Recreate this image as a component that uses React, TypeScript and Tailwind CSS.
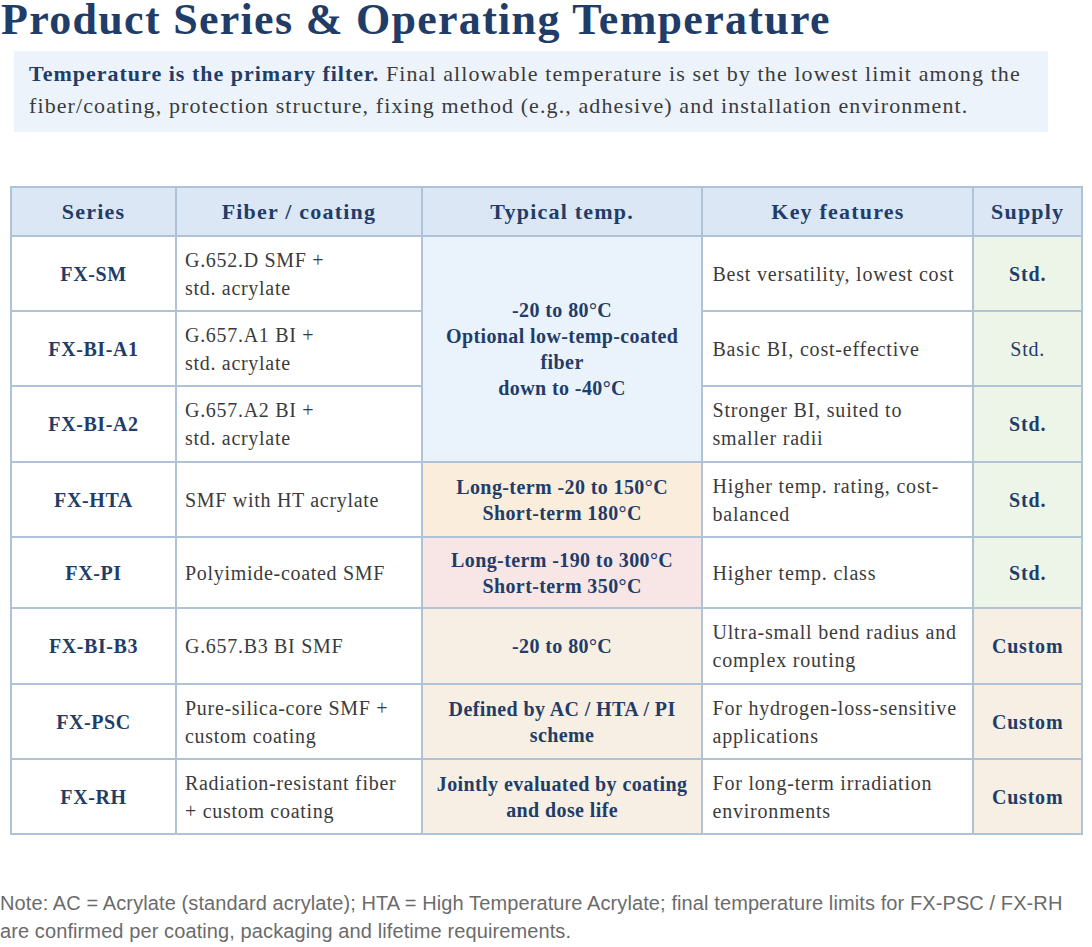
import React from "react";

type Row = {
  series: string;
  fiber: string[];
  temp?: { lines: string[]; bg: string; span?: number };
  features: string[];
  supply: string;
  supplyBold?: boolean;
  supplyBg: string;
  h: string;
};

const rows: Row[] = [
  {
    series: "FX-SM",
    fiber: ["G.652.D SMF +", "std. acrylate"],
    temp: {
      lines: ["-20 to 80°C", "Optional low-temp-coated", "fiber", "down to -40°C"],
      bg: "bg-[#eaf2fb]",
      span: 3,
    },
    features: ["Best versatility, lowest cost"],
    supply: "Std.",
    supplyBold: true,
    supplyBg: "bg-[#edf5e8]",
    h: "h-[75px]",
  },
  {
    series: "FX-BI-A1",
    fiber: ["G.657.A1 BI +", "std. acrylate"],
    features: ["Basic BI, cost-effective"],
    supply: "Std.",
    supplyBg: "bg-[#edf5e8]",
    h: "h-[75px]",
  },
  {
    series: "FX-BI-A2",
    fiber: ["G.657.A2 BI +", "std. acrylate"],
    features: ["Stronger BI, suited to", "smaller radii"],
    supply: "Std.",
    supplyBold: true,
    supplyBg: "bg-[#edf5e8]",
    h: "h-[76px]",
  },
  {
    series: "FX-HTA",
    fiber: ["SMF with HT acrylate"],
    temp: { lines: ["Long-term -20 to 150°C", "Short-term 180°C"], bg: "bg-[#fbeddc]" },
    features: ["Higher temp. rating, cost-", "balanced"],
    supply: "Std.",
    supplyBold: true,
    supplyBg: "bg-[#edf5e8]",
    h: "h-[75px]",
  },
  {
    series: "FX-PI",
    fiber: ["Polyimide-coated SMF"],
    temp: { lines: ["Long-term -190 to 300°C", "Short-term 350°C"], bg: "bg-[#f7e6e5]" },
    features: ["Higher temp. class"],
    supply: "Std.",
    supplyBold: true,
    supplyBg: "bg-[#edf5e8]",
    h: "h-[71px]",
  },
  {
    series: "FX-BI-B3",
    fiber: ["G.657.B3 BI SMF"],
    temp: { lines: ["-20 to 80°C"], bg: "bg-[#f7efe3]" },
    features: ["Ultra-small bend radius and", "complex routing"],
    supply: "Custom",
    supplyBold: true,
    supplyBg: "bg-[#f7efe3]",
    h: "h-[76px]",
  },
  {
    series: "FX-PSC",
    fiber: ["Pure-silica-core SMF +", "custom coating"],
    temp: { lines: ["Defined by AC / HTA / PI", "scheme"], bg: "bg-[#f7efe3]" },
    features: ["For hydrogen-loss-sensitive", "applications"],
    supply: "Custom",
    supplyBold: true,
    supplyBg: "bg-[#f7efe3]",
    h: "h-[75px]",
  },
  {
    series: "FX-RH",
    fiber: ["Radiation-resistant fiber", "+ custom coating"],
    temp: { lines: ["Jointly evaluated by coating", "and dose life"], bg: "bg-[#f7efe3]" },
    features: ["For long-term irradiation", "environments"],
    supply: "Custom",
    supplyBold: true,
    supplyBg: "bg-[#f7efe3]",
    h: "h-[75px]",
  },
];

const cell = "border-2 border-[#b0c3d6] align-middle";

export default function App() {
  return (
    <div className="w-[1092px] h-[947px] bg-white overflow-hidden relative font-['Liberation_Serif',serif]">
      <h1 className="pl-[1px] text-[44px] leading-[40px] font-bold text-[#1f3d68] tracking-[1.3px] whitespace-nowrap">
        Product Series &amp; Operating Temperature
      </h1>

      <div className="ml-[14px] mt-[11px] w-[1034px] h-[81px] bg-[#ecf3fb] pl-[15px] pt-[7px] text-[22px] leading-[32px] tracking-[1.1px] text-[#3b3b3b]">
        <span className="font-bold text-[#1f3d68] tracking-[1px]">Temperature is the primary filter.</span> Final
        allowable temperature is set by the lowest limit among the
        <br />
        fiber/coating, protection structure, fixing method (e.g., adhesive) and installation environment.
      </div>

      <table className="ml-[10px] mt-[54px] w-[1073px] border-collapse border-2 border-[#b0c3d6] text-[20px] leading-[28px]">
        <colgroup>
          <col className="w-[166px]" />
          <col className="w-[246px]" />
          <col className="w-[281px]" />
          <col className="w-[271px]" />
          <col className="w-[109px]" />
        </colgroup>
        <thead>
          <tr className="h-[49px] bg-[#dbe7f4] text-[#1f3d68] font-bold text-[22px] tracking-[1.2px]">
            <th className={cell}>Series</th>
            <th className={cell}>Fiber / coating</th>
            <th className={cell}>Typical temp.</th>
            <th className={cell}>Key features</th>
            <th className={cell}>Supply</th>
          </tr>
        </thead>
        <tbody>
          {rows.map((r) => (
            <tr key={r.series} className={r.h}>
              <td className={`${cell} text-center font-bold text-[#1f3d68] tracking-[0.6px]`}>
                {r.series}
              </td>
              <td className={`${cell} pl-[8px] text-[#3b3b3b] tracking-[0.7px] whitespace-nowrap`}>
                {r.fiber.map((l) => (
                  <div key={l}>{l}</div>
                ))}
              </td>
              {r.temp && (
                <td
                  rowSpan={r.temp.span ?? 1}
                  className={`${cell} ${r.temp.bg} text-center font-bold text-[#1f3d68] leading-[26px] tracking-[0.4px] whitespace-nowrap`}
                >
                  {r.temp.lines.map((l) => (
                    <div key={l}>{l}</div>
                  ))}
                </td>
              )}
              <td className={`${cell} pl-[9px] text-[#3b3b3b] tracking-[0.8px] whitespace-nowrap`}>
                {r.features.map((l) => (
                  <div key={l}>{l}</div>
                ))}
              </td>
              <td
                className={`${cell} ${r.supplyBg} text-center text-[#1f3d68] tracking-[0.8px] ${
                  r.supplyBold ? "font-bold" : ""
                }`}
              >
                {r.supply}
              </td>
            </tr>
          ))}
        </tbody>
      </table>

      <p className="mt-[54px] font-['Liberation_Sans',sans-serif] text-[20px] leading-[28px] tracking-[0.1px] text-[#6b6b6b] whitespace-nowrap">
        Note: AC = Acrylate (standard acrylate); HTA = High Temperature Acrylate; final temperature
        limits for FX-PSC / FX-RH
        <br />
        are confirmed per coating, packaging and lifetime requirements.
      </p>
    </div>
  );
}
